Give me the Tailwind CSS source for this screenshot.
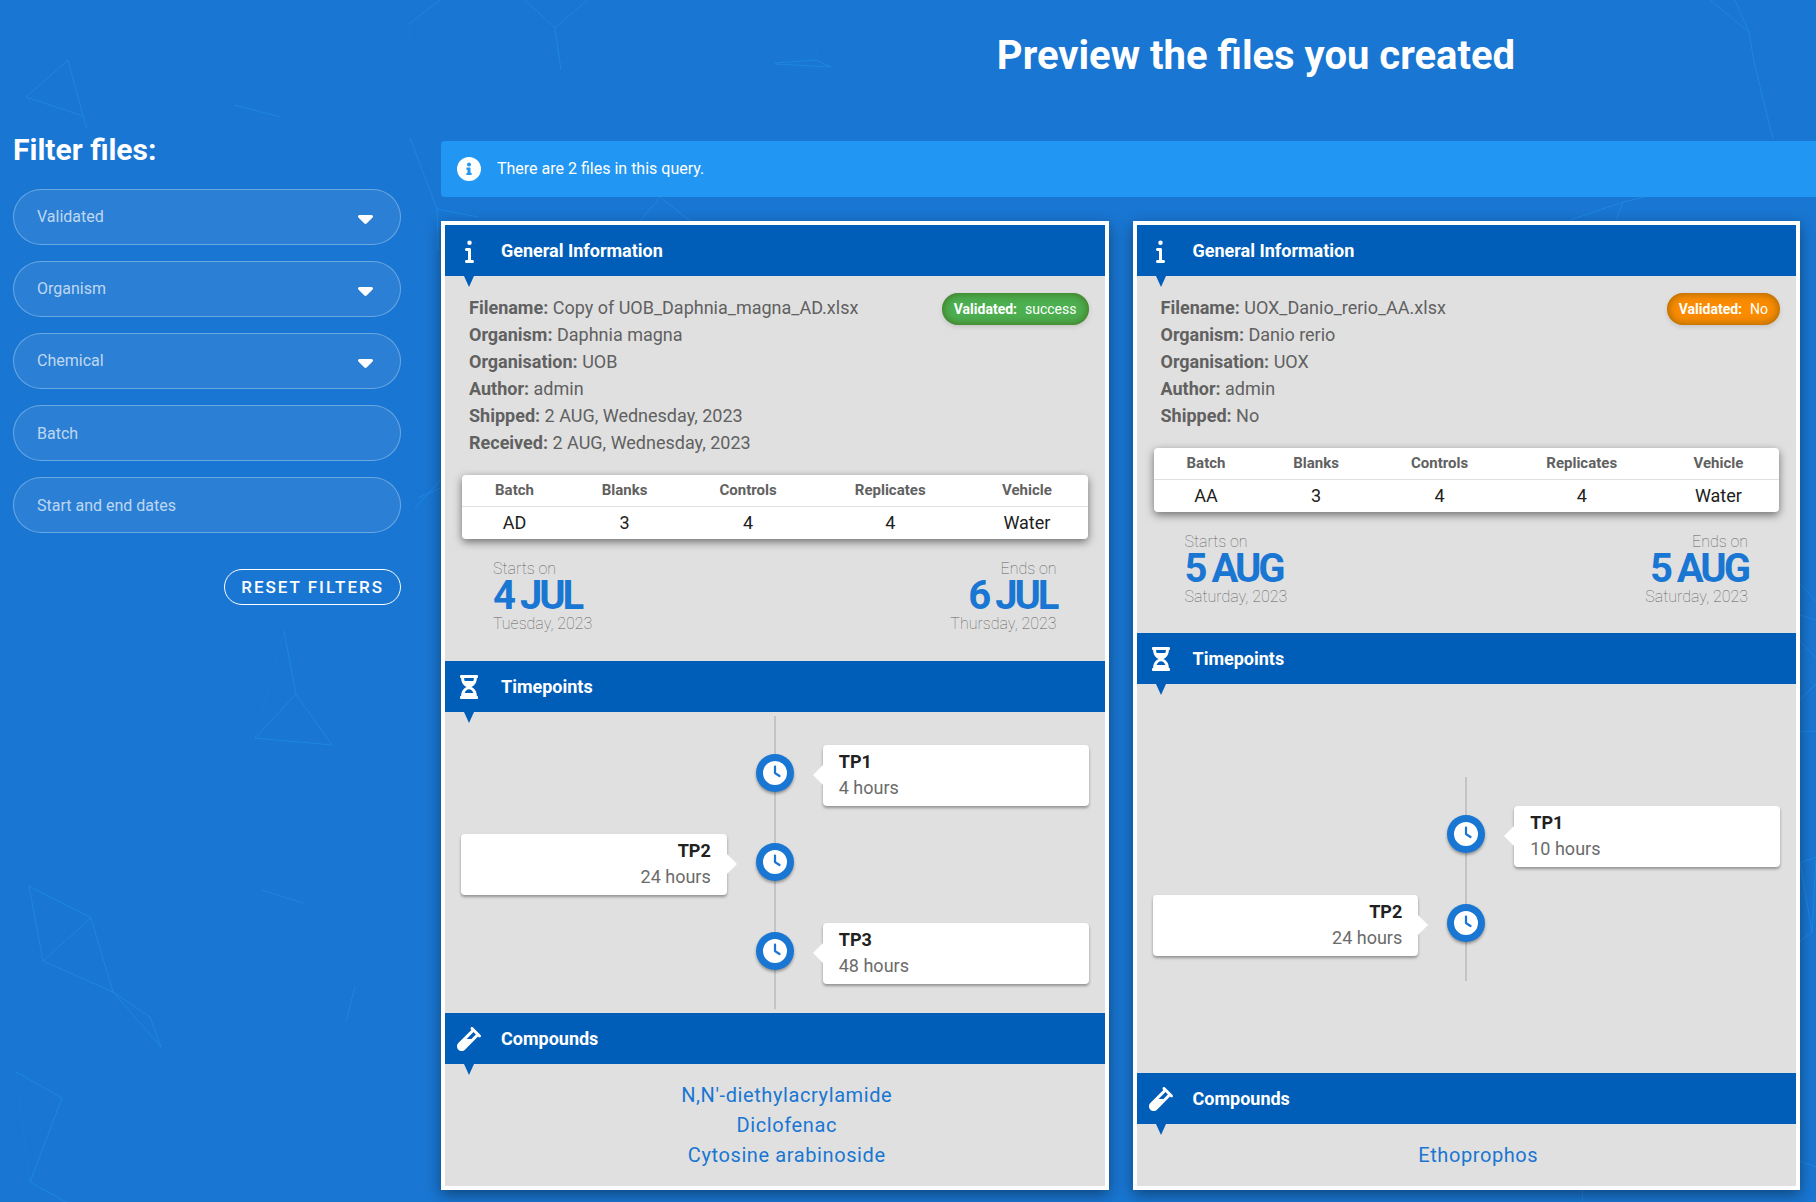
<!DOCTYPE html>
<html lang="en">
<head>
<meta charset="utf-8">
<meta name="viewport" content="width=device-width, initial-scale=1">
<title>Preview files</title>
<script src="https://cdn.jsdelivr.net/npm/@tailwindcss/browser@4"></script>
</head>
<body class="relative min-h-screen overflow-x-hidden bg-[#1976d2] font-['Roboto',sans-serif] text-white">

<!-- Icon set -->
<svg class="hidden" aria-hidden="true">
  <symbol id="info" viewBox="0 0 192 512"><path d="M48 80a48 48 0 1 1 96 0A48 48 0 1 1 48 80zM0 224c0-17.7 14.3-32 32-32H96c17.700 0 32 14.300 32 32V448h32c17.700 0 32 14.300 32 32s-14.300 32-32 32H32c-17.700 0-32-14.300-32-32s14.300-32 32-32H64V256H32c-17.700 0-32-14.300-32-32z"/></symbol>
  <symbol id="info-circle" viewBox="0 0 512 512"><path d="M256 0a256 256 0 1 0 0 512A256 256 0 1 0 256 0zm0 118c23.196 0 42 18.804 42 42s-18.804 42-42 42-42-18.804-42-42 18.804-42 42-42zm56 254c0 6.627-5.373 12-12 12h-88c-6.627 0-12-5.373-12-12v-24c0-6.627 5.373-12 12-12h12v-64h-12c-6.627 0-12-5.373-12-12v-24c0-6.627 5.373-12 12-12h64c6.627 0 12 5.373 12 12v100h12c6.627 0 12 5.373 12 12v24z"/></symbol>
  <symbol id="hourglass" viewBox="0 0 384 512"><path fill-rule="evenodd" d="M360 0H24C10.745 0 0 10.745 0 24v16c0 13.255 10.745 24 24 24 0 90.965 51.016 167.734 120.842 192C75.016 280.266 24 357.035 24 448c-13.255 0-24 10.745-24 24v16c0 13.255 10.745 24 24 24h336c13.255 0 24-10.745 24-24v-16c0-13.255-10.745-24-24-24 0-90.965-51.016-167.734-120.842-192C308.984 231.734 360 154.965 360 64c13.255 0 24-10.745 24-24V24c0-13.255-10.745-24-24-24zm-75.078 384H99.080c17.059-46.797 52.096-80 92.920-80 40.821 0 75.862 33.196 92.922 80zm.019-256H99.078C91.988 108.548 88 86.748 88 64h208c0 22.805-3.987 44.587-11.059 64z"/></symbol>
  <symbol id="vial" viewBox="0 0 512 512"><path fill-rule="evenodd" d="M342.600 9.400c-12.500-12.500-32.800-12.500-45.300 0s-12.500 32.800 0 45.300l9.400 9.400L28.100 342.600C10.100 360.600 0 385 0 410.500V416c0 53 43 96 96 96h5.500c25.500 0 49.900-10.100 67.900-28.100L448 205.300l9.400 9.400c12.500 12.500 32.800 12.500 45.300 0s12.500-32.800 0-45.300l-32-32-96-96-32-32zM205.300 256L352 109.300 402.700 160l-96 96H205.300z"/></symbol>
  <symbol id="clock" viewBox="0 0 512 512"><path fill-rule="evenodd" d="M256 0a256 256 0 1 1 0 512A256 256 0 1 1 256 0zM232 120V256c0 8 4 15.500 10.700 20l96 64c11 7.400 25.900 4.400 33.300-6.700s4.400-25.900-6.700-33.300L280 243.200V120c0-13.300-10.700-24-24-24s-24 10.700-24 24z"/></symbol>
  <symbol id="caret" viewBox="0 0 320 512"><path d="M137.400 374.600c12.500 12.500 32.800 12.500 45.300 0l128-128c9.200-9.200 11.900-22.900 6.900-34.900s-16.600-19.800-29.600-19.800L32 192c-12.900 0-24.600 7.800-29.600 19.800s-2.200 25.700 6.900 34.900l128 128z"/></symbol>
</svg>

<!-- Constellation backdrop -->
<svg class="pointer-events-none absolute inset-0 h-full w-full" fill="none" stroke="#2196f3" aria-hidden="true">
  <g stroke-opacity=".5">
    <path d="M83 116L26 97L68 60L83 116L87 128M234 105L281 117M440 0L409 24M525 0L555 28L587 0M555 28L561 70M775 63L816 60L831 67L775 64"/>
    <path d="M410 138L437 209L478 217M437 209L438 250M640 221L660 197L690 221M1710 0L1749 32L1735 0M1749 32L1754 62L1773 139M1570 220L1623 202L1645 197M1623 202L1616 220"/>
    <path d="M284 631L296 694L332 745L255 738L296 694M43 961L29 886L91 918L43 961L113 992L91 918M113 992L150 1017L161 1047L113 992M16 1072L62 1098L30 1182L66 1202M262 890L303 903M355 986L346 1022"/>
    <path d="M415 508L445 475M418 498L445 486M1801 585L1816 601M1800 615L1816 620M1800 641L1816 658M1800 700L1816 684M1800 732L1816 731M1800 863L1816 857M1800 862L1812 932L1800 941M1812 932L1816 860M1583 1190L1582 1202M1800 1161L1816 1167"/>
  </g>
  <g stroke-opacity=".15">
    <path d="M284 631L255 738M43 961L16 1072L30 1182M62 1098L161 1047L230 1131M62 1098L77 1202M303 903L355 986M600 0L561 70M820 0L816 60M828 0L831 67M409 24L409 43M26 97L58 128M410 138L470 217"/>
  </g>
</svg>

<div class="relative flex gap-10 pb-3 pl-[13px]">

  <aside class="w-[388px] shrink-0 pt-33">
    <h2 class="mb-[21px] text-[30px] leading-9 font-bold">Filter files:</h2>
    <form class="flex flex-col gap-4">
      <div class="relative">
        <select aria-label="Validated" class="block h-14 w-full appearance-none rounded-full border border-white/30 bg-white/8 px-[23px] text-base text-white/70"><option>Validated</option></select>
        <svg class="pointer-events-none absolute top-[17px] right-7 h-6 w-[15px] fill-white"><use href="#caret"/></svg>
      </div>
      <div class="relative">
        <select aria-label="Organism" class="block h-14 w-full appearance-none rounded-full border border-white/30 bg-white/8 px-[23px] text-base text-white/70"><option>Organism</option></select>
        <svg class="pointer-events-none absolute top-[17px] right-7 h-6 w-[15px] fill-white"><use href="#caret"/></svg>
      </div>
      <div class="relative">
        <select aria-label="Chemical" class="block h-14 w-full appearance-none rounded-full border border-white/30 bg-white/8 px-[23px] text-base text-white/70"><option>Chemical</option></select>
        <svg class="pointer-events-none absolute top-[17px] right-7 h-6 w-[15px] fill-white"><use href="#caret"/></svg>
      </div>
      <input type="text" aria-label="Batch" placeholder="Batch" class="block h-14 w-full rounded-full border border-white/30 bg-white/8 px-[23px] text-base placeholder:text-white/70">
      <input type="text" aria-label="Start and end dates" placeholder="Start and end dates" class="block h-14 w-full rounded-full border border-white/30 bg-white/8 px-[23px] text-base placeholder:text-white/70">
      <button type="reset" class="mt-5 h-9 self-end rounded-full border border-white px-4 text-[17px] leading-none font-medium tracking-[2px]">RESET FILTERS</button>
    </form>
  </aside>

  <main class="min-w-0 flex-1 pt-8">
    <h1 class="mb-[61px] pl-[255px] text-center text-[40px] leading-12 font-bold">Preview the files you created</h1>

    <div role="status" class="mb-6 flex h-14 items-center gap-4 rounded-l bg-[#2196f3] pl-4 text-base">
      <svg class="size-6 fill-white"><use href="#info-circle"/></svg>
      <p>There are 2 files in this query.</p>
    </div>

    <div class="mr-4 grid grid-cols-2 gap-6">

      <article class="flex flex-col border-4 border-white bg-[#e0e0e0] text-lg text-[#616161] shadow-[0_5px_14px_rgba(0,0,0,0.4)]">
        <header class="relative flex h-[51px] items-center gap-5 bg-[#005eb8] pl-3 text-white">
          <span class="flex w-6 justify-center"><svg class="h-6 w-[9px] fill-white"><use href="#info"/></svg></span>
          <h3 class="font-bold">General Information</h3>
          <span class="absolute top-full left-[19px] border-x-5 border-t-11 border-x-transparent border-t-[#005eb8]"></span>
        </header>
        <section class="h-[385px] px-4 pt-[17px]">
          <div class="flex items-start justify-between">
            <dl class="mt-px pl-2 leading-[27px]">
              <div><dt class="inline font-bold">Filename:</dt> <dd class="inline">Copy of UOB_Daphnia_magna_AD.xlsx</dd></div>
              <div><dt class="inline font-bold">Organism:</dt> <dd class="inline">Daphnia magna</dd></div>
              <div><dt class="inline font-bold">Organisation:</dt> <dd class="inline">UOB</dd></div>
              <div><dt class="inline font-bold">Author:</dt> <dd class="inline">admin</dd></div>
              <div><dt class="inline font-bold">Shipped:</dt> <dd class="inline">2 AUG, Wednesday, 2023</dd></div>
              <div><dt class="inline font-bold">Received:</dt> <dd class="inline">2 AUG, Wednesday, 2023</dd></div>
            </dl>
            <p class="flex h-8 items-center gap-2 rounded-full bg-[#4caf50] px-3 text-sm text-white shadow-[inset_0_0_10px_rgba(60,80,0,0.7),0_2px_5px_rgba(0,0,0,0.12)]"><b>Validated:</b><span>success</span></p>
          </div>
          <div class="mx-px mt-[19px] rounded bg-white text-center shadow-[0_3px_8px_rgba(0,0,0,0.5)]">
            <table class="w-full">
              <thead><tr class="h-[31px] border-b border-[#e0e0e0] text-[15px] leading-5"><th class="px-4">Batch</th><th class="px-4">Blanks</th><th class="px-4">Controls</th><th class="px-4">Replicates</th><th class="px-4">Vehicle</th></tr></thead>
              <tbody><tr class="h-[33px] leading-6 text-[#212121]"><td>AD</td><td>3</td><td>4</td><td>4</td><td>Water</td></tr></tbody>
            </table>
          </div>
          <div class="mt-5 flex justify-between px-8 text-base leading-5 font-thin">
            <p class="flex flex-col"><span>Starts on</span><b class="mt-[3px] mb-1 text-[40px] leading-7 font-bold tracking-[-3px] text-[#1976d2]">4 JUL</b><span>Tuesday, 2023</span></p>
            <p class="flex flex-col text-right"><span>Ends on</span><b class="mt-[3px] mb-1 text-[40px] leading-7 font-bold tracking-[-3px] text-[#1976d2]">6 JUL</b><span>Thursday, 2023</span></p>
          </div>
        </section>

        <header class="relative flex h-[51px] items-center gap-5 bg-[#005eb8] pl-3 text-white">
          <span class="flex w-6 justify-center"><svg class="h-6 w-[18px] fill-white"><use href="#hourglass"/></svg></span>
          <h3 class="font-bold">Timepoints</h3>
          <span class="absolute top-full left-[19px] border-x-5 border-t-11 border-x-transparent border-t-[#005eb8]"></span>
        </header>
        <section class="flex flex-1 flex-col justify-center px-4 py-1">
          <ol class="relative flex flex-col gap-7 pt-[29px] pb-[25px] leading-[26px]">
            <li class="absolute inset-y-0 left-1/2 -ml-px w-0.5 bg-[#c4c4c4]" role="presentation"></li>
            <li class="relative grid grid-cols-[1fr_38px_1fr] items-start gap-x-[29px]">
              <span class="col-start-2 mt-[9px] flex size-[38px] items-center justify-center rounded-full bg-[#1976d2] shadow-[0_2px_3px_rgba(0,0,0,0.35)]"><svg class="size-6 fill-white"><use href="#clock"/></svg></span>
              <div class="relative h-[61px] rounded bg-white px-4 pt-1 shadow-[0_2px_3px_rgba(0,0,0,0.35)]"><span class="absolute top-5 right-full border-y-10 border-r-10 border-y-transparent border-r-white"></span><h4 class="font-bold text-[#212121]">TP1</h4><p class="text-[#6b6b6b]">4 hours</p></div>
            </li>
            <li class="relative grid grid-cols-[1fr_38px_1fr] items-start gap-x-[29px]">
              <div class="relative h-[61px] rounded bg-white px-4 pt-1 text-right shadow-[0_2px_3px_rgba(0,0,0,0.35)]"><span class="absolute top-5 left-full border-y-10 border-l-10 border-y-transparent border-l-white"></span><h4 class="font-bold text-[#212121]">TP2</h4><p class="text-[#6b6b6b]">24 hours</p></div>
              <span class="col-start-2 mt-[9px] flex size-[38px] items-center justify-center rounded-full bg-[#1976d2] shadow-[0_2px_3px_rgba(0,0,0,0.35)]"><svg class="size-6 fill-white"><use href="#clock"/></svg></span>
            </li>
            <li class="relative grid grid-cols-[1fr_38px_1fr] items-start gap-x-[29px]">
              <span class="col-start-2 mt-[9px] flex size-[38px] items-center justify-center rounded-full bg-[#1976d2] shadow-[0_2px_3px_rgba(0,0,0,0.35)]"><svg class="size-6 fill-white"><use href="#clock"/></svg></span>
              <div class="relative h-[61px] rounded bg-white px-4 pt-1 shadow-[0_2px_3px_rgba(0,0,0,0.35)]"><span class="absolute top-5 right-full border-y-10 border-r-10 border-y-transparent border-r-white"></span><h4 class="font-bold text-[#212121]">TP3</h4><p class="text-[#6b6b6b]">48 hours</p></div>
            </li>
          </ol>
        </section>

        <header class="relative flex h-[51px] items-center gap-5 bg-[#005eb8] pl-3 text-white">
          <svg class="size-6 fill-white"><use href="#vial"/></svg>
          <h3 class="font-bold">Compounds</h3>
          <span class="absolute top-full left-[19px] border-x-5 border-t-11 border-x-transparent border-t-[#005eb8]"></span>
        </header>
        <ul class="py-4 pl-6 text-center text-xl leading-[30px] tracking-[0.6px] text-[#1976d2]">
          <li>N,N'-diethylacrylamide</li><li>Diclofenac</li><li>Cytosine arabinoside</li>
        </ul>
      </article>

      <article class="flex flex-col border-4 border-white bg-[#e0e0e0] text-lg text-[#616161] shadow-[0_5px_14px_rgba(0,0,0,0.4)]">
        <header class="relative flex h-[51px] items-center gap-5 bg-[#005eb8] pl-3 text-white">
          <span class="flex w-6 justify-center"><svg class="h-6 w-[9px] fill-white"><use href="#info"/></svg></span>
          <h3 class="font-bold">General Information</h3>
          <span class="absolute top-full left-[19px] border-x-5 border-t-11 border-x-transparent border-t-[#005eb8]"></span>
        </header>
        <section class="h-[357px] px-4 pt-[17px]">
          <div class="flex items-start justify-between">
            <dl class="mt-px pl-2 leading-[27px]">
              <div><dt class="inline font-bold">Filename:</dt> <dd class="inline">UOX_Danio_rerio_AA.xlsx</dd></div>
              <div><dt class="inline font-bold">Organism:</dt> <dd class="inline">Danio rerio</dd></div>
              <div><dt class="inline font-bold">Organisation:</dt> <dd class="inline">UOX</dd></div>
              <div><dt class="inline font-bold">Author:</dt> <dd class="inline">admin</dd></div>
              <div><dt class="inline font-bold">Shipped:</dt> <dd class="inline">No</dd></div>
            </dl>
            <p class="flex h-8 items-center gap-2 rounded-full bg-[#fb8c00] px-3 text-sm text-white shadow-[inset_0_0_10px_rgba(110,80,0,0.7),0_2px_5px_rgba(0,0,0,0.12)]"><b>Validated:</b><span>No</span></p>
          </div>
          <div class="mx-px mt-[19px] rounded bg-white text-center shadow-[0_3px_8px_rgba(0,0,0,0.5)]">
            <table class="w-full">
              <thead><tr class="h-[31px] border-b border-[#e0e0e0] text-[15px] leading-5"><th class="px-4">Batch</th><th class="px-4">Blanks</th><th class="px-4">Controls</th><th class="px-4">Replicates</th><th class="px-4">Vehicle</th></tr></thead>
              <tbody><tr class="h-[33px] leading-6 text-[#212121]"><td>AA</td><td>3</td><td>4</td><td>4</td><td>Water</td></tr></tbody>
            </table>
          </div>
          <div class="mt-5 flex justify-between px-8 text-base leading-5 font-thin">
            <p class="flex flex-col"><span>Starts on</span><b class="mt-[3px] mb-1 text-[40px] leading-7 font-bold tracking-[-3px] text-[#1976d2]">5 AUG</b><span>Saturday, 2023</span></p>
            <p class="flex flex-col text-right"><span>Ends on</span><b class="mt-[3px] mb-1 text-[40px] leading-7 font-bold tracking-[-3px] text-[#1976d2]">5 AUG</b><span>Saturday, 2023</span></p>
          </div>
        </section>

        <header class="relative flex h-[51px] items-center gap-5 bg-[#005eb8] pl-3 text-white">
          <span class="flex w-6 justify-center"><svg class="h-6 w-[18px] fill-white"><use href="#hourglass"/></svg></span>
          <h3 class="font-bold">Timepoints</h3>
          <span class="absolute top-full left-[19px] border-x-5 border-t-11 border-x-transparent border-t-[#005eb8]"></span>
        </header>
        <section class="flex flex-1 flex-col justify-center px-4 py-1">
          <ol class="relative flex flex-col gap-7 pt-[29px] pb-[25px] leading-[26px]">
            <li class="absolute inset-y-0 left-1/2 -ml-px w-0.5 bg-[#c4c4c4]" role="presentation"></li>
            <li class="relative grid grid-cols-[1fr_38px_1fr] items-start gap-x-[29px]">
              <span class="col-start-2 mt-[9px] flex size-[38px] items-center justify-center rounded-full bg-[#1976d2] shadow-[0_2px_3px_rgba(0,0,0,0.35)]"><svg class="size-6 fill-white"><use href="#clock"/></svg></span>
              <div class="relative h-[61px] rounded bg-white px-4 pt-1 shadow-[0_2px_3px_rgba(0,0,0,0.35)]"><span class="absolute top-5 right-full border-y-10 border-r-10 border-y-transparent border-r-white"></span><h4 class="font-bold text-[#212121]">TP1</h4><p class="text-[#6b6b6b]">10 hours</p></div>
            </li>
            <li class="relative grid grid-cols-[1fr_38px_1fr] items-start gap-x-[29px]">
              <div class="relative h-[61px] rounded bg-white px-4 pt-1 text-right shadow-[0_2px_3px_rgba(0,0,0,0.35)]"><span class="absolute top-5 left-full border-y-10 border-l-10 border-y-transparent border-l-white"></span><h4 class="font-bold text-[#212121]">TP2</h4><p class="text-[#6b6b6b]">24 hours</p></div>
              <span class="col-start-2 mt-[9px] flex size-[38px] items-center justify-center rounded-full bg-[#1976d2] shadow-[0_2px_3px_rgba(0,0,0,0.35)]"><svg class="size-6 fill-white"><use href="#clock"/></svg></span>
            </li>
          </ol>
        </section>

        <header class="relative flex h-[51px] items-center gap-5 bg-[#005eb8] pl-3 text-white">
          <svg class="size-6 fill-white"><use href="#vial"/></svg>
          <h3 class="font-bold">Compounds</h3>
          <span class="absolute top-full left-[19px] border-x-5 border-t-11 border-x-transparent border-t-[#005eb8]"></span>
        </header>
        <ul class="py-4 pl-6 text-center text-xl leading-[30px] tracking-[0.6px] text-[#1976d2]">
          <li>Ethoprophos</li>
        </ul>
      </article>

    </div>
  </main>
</div>
</body>
</html>
